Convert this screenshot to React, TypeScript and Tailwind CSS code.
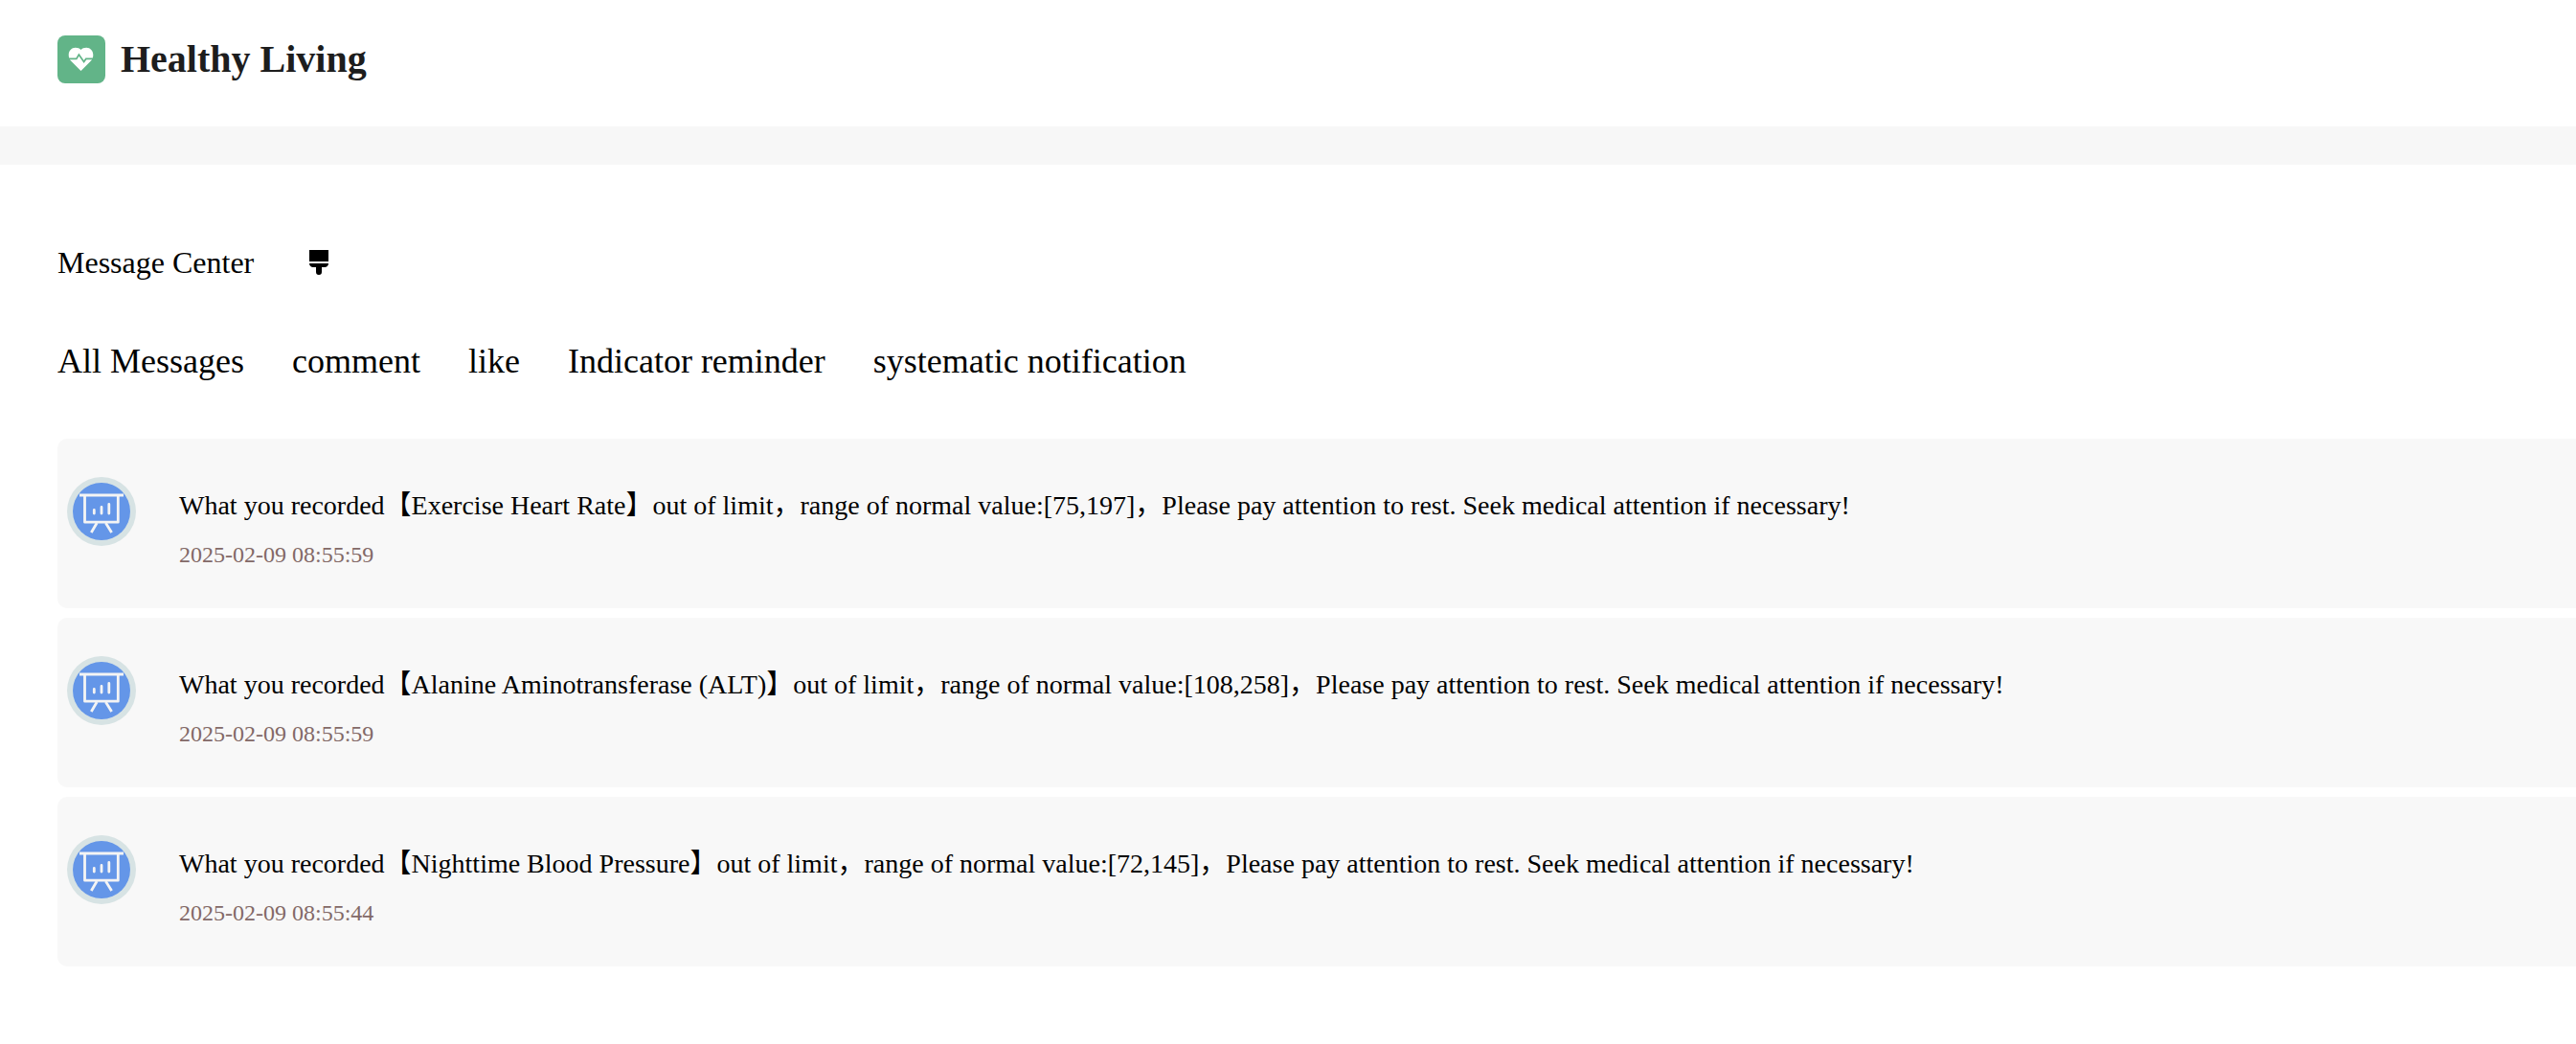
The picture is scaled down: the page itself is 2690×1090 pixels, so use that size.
type Message = { id: number; subject: string; range: string; time: string };

const messages: Message[] = [
  { id: 1, subject: "Exercise Heart Rate", range: "[75,197]", time: "2025-02-09 08:55:59" },
  { id: 2, subject: "Alanine Aminotransferase (ALT)", range: "[108,258]", time: "2025-02-09 08:55:59" },
  { id: 3, subject: "Nighttime Blood Pressure", range: "[72,145]", time: "2025-02-09 08:55:44" },
];

const tabs = ["All Messages", "comment", "like", "Indicator reminder", "systematic notification"];

function HeartLogo() {
  return (
    <svg viewBox="0 0 50 50" className="size-[50px] shrink-0" aria-hidden="true">
      <rect width="50" height="50" rx="8" fill="#62b488" />
      <path
        d="M24.5 37L14 26.5C12.4 24.6 11.7 22.8 11.7 20.2C11.7 16 14.8 12.8 18.8 12.8C21.2 12.8 23.2 13.6 24.5 15C25.8 13.6 27.8 12.8 30.2 12.8C34.2 12.8 37.3 16 37.3 20.2C37.3 22.8 36.6 24.6 35 26.5Z"
        fill="#fff"
      />
      <path d="M10 24.4H19.8L22.4 20L27.6 27.6L29.8 24.4H39" fill="none" stroke="#62b488" strokeWidth="1.7" />
    </svg>
  );
}

function BrushIcon() {
  return (
    <svg viewBox="0 0 22 26" className="h-[26px] w-[22px]" fill="#000" aria-hidden="true">
      <path d="M1 0H21V12H1Z" />
      <path d="M1 14H21C21 16.8 19 18 17 18H14V23A3 3 0 0 1 8 23V18H5C3 18 1 16.8 1 14Z" />
    </svg>
  );
}

function BoardIcon() {
  return (
    <svg viewBox="0 0 72 72" className="size-[72px] shrink-0" fill="none" aria-hidden="true">
      <circle cx="36" cy="36" r="36" fill="#d7e3e4" />
      <circle cx="36" cy="36" r="30" fill="#6496e8" />
      <g stroke="#f4f4f4" strokeWidth="2.8">
        <path d="M13 19H59" />
        <path d="M18.5 19V47.2H53.3V19" strokeLinejoin="round" />
        <path d="M31.2 48L25.3 58M40.4 48L46.6 58" />
        <path d="M28.3 34.5V38M36 31.5V38M43.8 28.5V38" strokeLinecap="round" />
      </g>
    </svg>
  );
}

export default function App() {
  return (
    <div className="min-h-screen bg-white font-['Liberation_Serif','Noto_Sans_CJK_SC',serif] text-black">
      <header className="flex items-start gap-4 px-[60px] pt-[37px] pb-[45px]">
        <HeartLogo />
        <h1 className="text-[40px] leading-[50px] font-bold text-[#1d1d1d]">Healthy Living</h1>
      </header>
      <div className="h-10 bg-[#f7f7f7]" />
      <main className="pt-[82px] pl-[60px]">
        <div className="flex items-center gap-[57px]">
          <h2 className="text-[32px] leading-10">Message Center</h2>
          <button type="button" aria-label="Clear messages">
            <BrushIcon />
          </button>
        </div>
        <nav className="mt-[61px] flex gap-[50px]">
          {tabs.map((tab) => (
            <button key={tab} type="button" className="text-[36px] leading-[44px]">
              {tab}
            </button>
          ))}
        </nav>
        <ul className="mt-[59px] flex flex-col gap-[10px]">
          {messages.map((m) => (
            <li key={m.id} className="flex gap-[45px] rounded-l-[10px] bg-[#f8f8f8] px-[10px] pt-10 pb-[39px]">
              <BoardIcon />
              <div className="pt-[10px]">
                <p className="text-[28px] leading-10">
                  What you recorded【{m.subject}】out of limit，range of normal value:{m.range}，Please pay attention to rest. Seek medical attention if necessary!
                </p>
                <time className="mt-[14px] block text-[24px] leading-[34px] text-[#836967]">{m.time}</time>
              </div>
            </li>
          ))}
        </ul>
      </main>
    </div>
  );
}
